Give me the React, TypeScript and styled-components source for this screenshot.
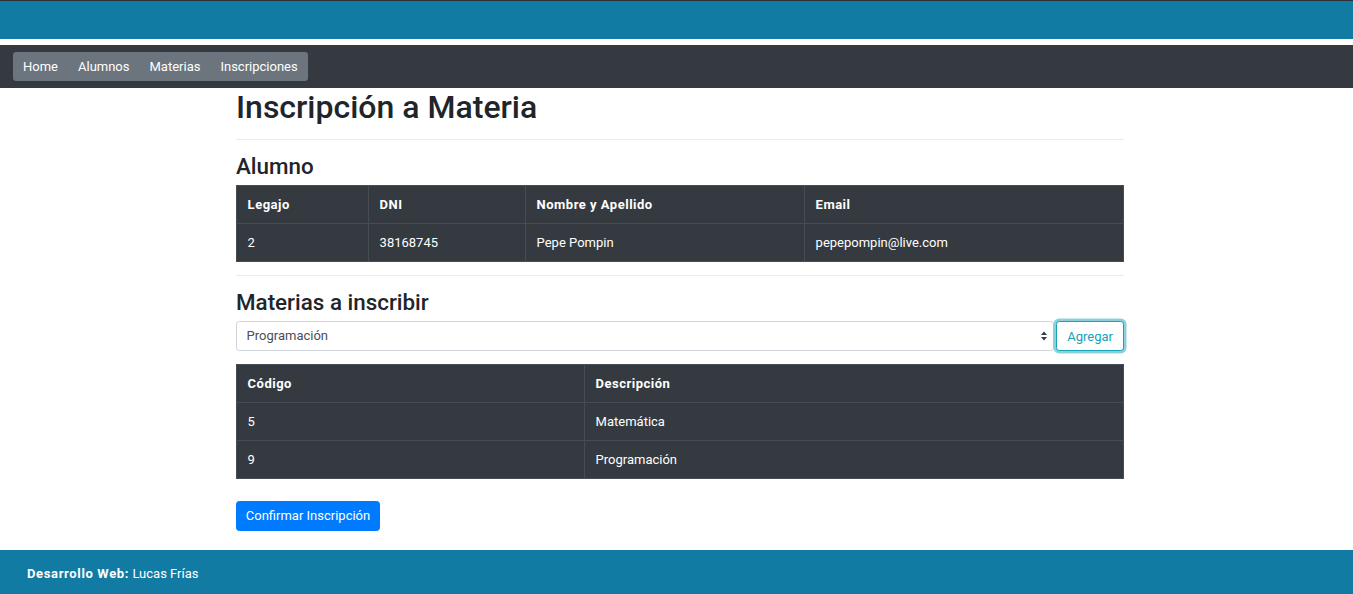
import React from "react";
import styled, { createGlobalStyle } from "styled-components";

const Global = createGlobalStyle`
  html { font-size: 12.8px; }
  body {
    margin: 0;
    font-family: Roboto, "Liberation Sans", Arial, sans-serif;
    font-size: 13px;
    line-height: 1.5;
    color: #212529;
    background: #fff;
  }
  * { box-sizing: border-box; }
`;

const Page = styled.div`
  display: flex;
  flex-direction: column;
  min-height: 594px;
`;

const TopBand = styled.div`
  height: 39px;
  background: #117ba3;
  border-top: 1px solid #2b3035;
`;

const NavBar = styled.nav`
  margin-top: 6px;
  height: 43px;
  background: #343a40;
  display: flex;
  align-items: center;
  padding: 0 13px;
`;

const NavPills = styled.ul`
  display: flex;
  list-style: none;
  margin: 0;
  padding: 0;
  background: #6c757d;
  border-radius: 3.2px;
  height: 29px;
  align-items: center;
`;

const NavLink = styled.a`
  color: #fff;
  text-decoration: none;
  padding: 0 10px;
  font-size: 13px;
  line-height: 29px;
`;

const Main = styled.main`
  flex: 1;
  padding-left: 236px;
  width: calc(236px + 888px);
`;

const Title = styled.h1`
  font-size: 32px;
  font-weight: 500;
  line-height: 1.2;
  margin: 0 0 6.4px;
`;

const Rule = styled.hr`
  margin: 12.8px 0;
  border: 0;
  border-top: 1px solid #e9ecef;
`;

const Subtitle = styled.h3`
  font-size: 22.4px;
  font-weight: 500;
  line-height: 1.2;
  margin: 0 0 5.4px;
`;

const Table = styled.table`
  width: 100%;
  border-collapse: collapse;
  background: #343a40;
  color: #fff;
  margin-bottom: 12.8px;
`;

const Th = styled.th<{ $w?: string }>`
  text-align: left;
  font-weight: 700;
  padding: 9px 10.6px;
  border: 1px solid #454d55;
  width: ${(p) => p.$w || "auto"};
  letter-spacing: 0.5px;
  line-height: 19px;
`;

const Td = styled.td`
  padding: 9px 10.6px;
  border: 1px solid #454d55;
  line-height: 19px;
`;

const FormRow = styled.div`
  display: flex;
  gap: 2px;
  margin-bottom: 13px;
`;

const SelectBox = styled.div`
  flex: 1;
  height: 30px;
  border: 1px solid #ced4da;
  border-radius: 3.2px;
  display: flex;
  align-items: center;
  justify-content: space-between;
  padding: 0 5px 0 9.6px;
  color: #495057;
`;

const Arrows = styled.svg`
  width: 8px;
  height: 10px;
`;

const OutlineButton = styled.button`
  height: 30px;
  padding: 0 10px;
  font-family: inherit;
  font-size: 13px;
  color: #17a2b8;
  background: #fff;
  border: 1px solid #17a2b8;
  border-radius: 3.2px;
  box-shadow: 0 0 0 2.5px rgba(23, 162, 184, 0.5);
`;

const PrimaryButton = styled.button`
  margin-top: 9px;
  height: 30px;
  padding: 0 8.8px;
  font-family: inherit;
  font-size: 13px;
  color: #fff;
  background: #007bff;
  border: 1px solid #007bff;
  border-radius: 3.2px;
`;

const Footer = styled.footer`
  margin-top: 19px;
  height: 44px;
  background: #117ba3;
  color: #fff;
  display: flex;
  align-items: center;
  padding: 3px 0 0 27px;
`;

const Strong = styled.b`
  font-weight: 700;
  letter-spacing: 0.65px;
`;

export default function App() {
  return (
    <>
      <Global />
      <Page>
        <TopBand />
        <NavBar>
          <NavPills>
            <li><NavLink href="#">Home</NavLink></li>
            <li><NavLink href="#">Alumnos</NavLink></li>
            <li><NavLink href="#">Materias</NavLink></li>
            <li><NavLink href="#">Inscripciones</NavLink></li>
          </NavPills>
        </NavBar>
        <Main>
          <Title>Inscripción a Materia</Title>
          <Rule />
          <Subtitle>Alumno</Subtitle>
          <Table>
            <thead>
              <tr>
                <Th $w="132px">Legajo</Th>
                <Th $w="157px">DNI</Th>
                <Th $w="279px">Nombre y Apellido</Th>
                <Th>Email</Th>
              </tr>
            </thead>
            <tbody>
              <tr>
                <Td>2</Td>
                <Td>38168745</Td>
                <Td>Pepe Pompin</Td>
                <Td>pepepompin@live.com</Td>
              </tr>
            </tbody>
          </Table>
          <Rule />
          <Subtitle>Materias a inscribir</Subtitle>
          <FormRow>
            <SelectBox>
              <span>Programación</span>
              <Arrows viewBox="0 0 8 10">
                <path d="M4 0.5 L7 4 L1 4 Z M4 9.5 L7 6 L1 6 Z" fill="#343a40" />
              </Arrows>
            </SelectBox>
            <OutlineButton>Agregar</OutlineButton>
          </FormRow>
          <Table>
            <thead>
              <tr>
                <Th $w="348px">Código</Th>
                <Th>Descripción</Th>
              </tr>
            </thead>
            <tbody>
              <tr>
                <Td>5</Td>
                <Td>Matemática</Td>
              </tr>
              <tr>
                <Td>9</Td>
                <Td>Programación</Td>
              </tr>
            </tbody>
          </Table>
          <PrimaryButton>Confirmar Inscripción</PrimaryButton>
        </Main>
        <Footer>
          <span>
            <Strong>Desarrollo Web:</Strong> Lucas Frías
          </span>
        </Footer>
      </Page>
    </>
  );
}
